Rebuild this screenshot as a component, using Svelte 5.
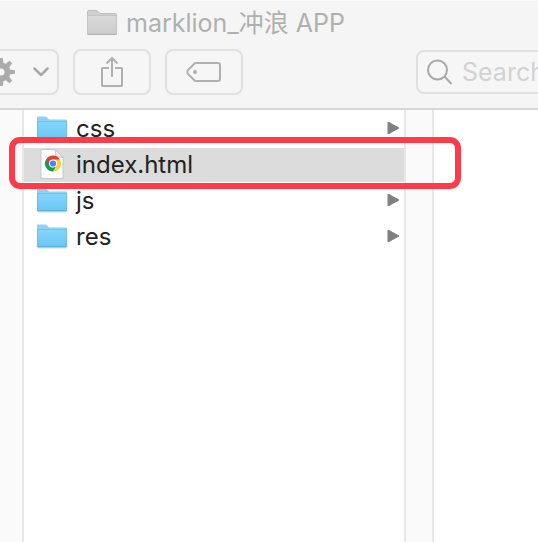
<script>
  const files = [
    { name: 'css', kind: 'folder' },
    { name: 'index.html', kind: 'html', selected: true },
    { name: 'js', kind: 'folder' },
    { name: 'res', kind: 'folder' }
  ];
  const teeth = [0, 45, 90, 135, 180, 225, 270, 315];
</script>

<div class="window">
  <header>
    <h1>
      <svg width="30" height="26" viewBox="0 0 30 26" aria-hidden="true">
        <defs>
          <linearGradient id="grey" x1="0" y1="0" x2="0" y2="1">
            <stop offset="0" stop-color="#dadada" />
            <stop offset="1" stop-color="#cccccc" />
          </linearGradient>
        </defs>
        <path d="M.5 24V2Q.5 .5 2 .5H9Q10 .5 11 1.500L13 3.500H28.500Q29.500 3.500 29.500 4.500V24Z" fill="#cfcfcf" stroke="#bdbdbd" />
        <path d="M.5 5.500H29.500V24H.5Z" fill="url(#grey)" stroke="#c4c4c4" />
        <path d="M.5 24.500H29.500" stroke="#b5b5b5" />
      </svg>
      <span>marklion_冲浪 APP</span>
    </h1>
    <div class="toolbar">
      <button class="action" aria-label="Action">
        <svg width="28" height="28" viewBox="-14 -14 28 28" aria-hidden="true">
          {#each teeth as angle}
            <path d="M-2.600 -8L-1.800 -14H1.800L2.600 -8Z" fill="#ababab" transform="rotate({angle})" />
          {/each}
          <circle r="6.500" fill="none" stroke="#ababab" stroke-width="6" />
        </svg>
        <svg width="16" height="10" viewBox="0 0 16 10" aria-hidden="true">
          <path d="M1.500 1.500L8 8L14.500 1.500" fill="none" stroke="#a9a9a9" stroke-width="2.500" stroke-linecap="round" stroke-linejoin="round" />
        </svg>
      </button>
      <button aria-label="Share">
        <svg width="24" height="32" viewBox="0 0 24 32" fill="none" stroke="#b0b0b0" stroke-width="2" aria-hidden="true">
          <path d="M9 12H2.500Q2 12 2 12.500V29.500Q2 30 2.500 30H21.500Q22 30 22 29.500V12.500Q22 12 21.500 12H15M12 21V2M6.500 7.500L12 2L17.500 7.500" />
        </svg>
      </button>
      <button aria-label="Tags">
        <svg width="36" height="22" viewBox="0 0 36 22" fill="none" stroke="#b0b0b0" stroke-width="2" aria-hidden="true">
          <path d="M10 2H32Q34 2 34 4V18Q34 20 32 20H10Q9 20 8 19L2 13Q.8 11 2 9L8 3Q9 2 10 2Z" />
          <circle cx="9" cy="11" r="2" fill="#b0b0b0" stroke="none" />
        </svg>
      </button>
      <label class="search">
        <svg width="27" height="27" viewBox="0 0 27 27" fill="none" stroke="#a9a9a9" stroke-width="2" aria-hidden="true">
          <circle cx="10.500" cy="11" r="9.500" />
          <path d="M17.500 17.500L24.500 25" />
        </svg>
        <input type="search" placeholder="Search" aria-label="Search" />
      </label>
    </div>
  </header>

  <main>
    <div class="gutter"></div>
    <ul>
      {#each files as file}
        <li class:selected={file.selected}>
          <button class="file">
            {#if file.kind === 'folder'}
              <svg width="32" height="26" viewBox="0 0 32 26" aria-hidden="true">
                <defs>
                  <linearGradient id="blue-{file.name}" x1="0" y1="0" x2="0" y2="1">
                    <stop offset="0" stop-color="#83d5fb" />
                    <stop offset="1" stop-color="#69c7f3" />
                  </linearGradient>
                </defs>
                <path d="M1 24V2.500Q1 1.500 2 1.500H9Q10 1.500 11 2.500L13 4.500H30Q31 4.500 31 5.500V24Z" fill="#8dd2f3" />
                <path d="M1 7H31V23Q31 24 30 24H2Q1 24 1 23Z" fill="url(#blue-{file.name})" />
                <path d="M1.500 6V23.500M30.500 6V23.500M1 6.500H31" stroke="#6bbde4" opacity=".7" />
                <path d="M1.500 24H30.500" stroke="#4b9fc6" />
                <path d="M2 25H30" stroke="#bccbd2" opacity=".6" />
              </svg>
            {:else}
              <svg width="32" height="32" viewBox="0 0 32 32" aria-hidden="true">
                <path d="M5 1.500H19L27 9.500V30.500H5Z" fill="#fff" stroke="#bdbdbd" stroke-width=".8" />
                <path d="M19 1.500L20 8.500L27 9.500Z" fill="#f1f1f1" stroke="#bbb" stroke-width=".8" />
                <g transform="translate(17 15.500)">
                  <path d="M0 0L-6.930 -4A8 8 0 0 1 6.930 -4Z" fill="#db4437" />
                  <path d="M0 0L6.930 -4A8 8 0 0 1 0 8Z" fill="#ffcd40" />
                  <path d="M0 0L0 8A8 8 0 0 1 -6.930 -4Z" fill="#0f9d58" />
                  <path d="M0 -4H6.930L3.460 2Z" fill="#ffcd40" />
                  <path d="M3.460 2L0 8L-3.460 2Z" fill="#0f9d58" />
                  <path d="M-3.460 2L-6.930 -4L0 -4Z" fill="#db4437" />
                  <circle r="4" fill="#fff" />
                  <circle r="3.100" fill="#4285f4" />
                </g>
              </svg>
            {/if}
            <span>{file.name}</span>
            {#if file.kind === 'folder'}
              <svg class="arrow" width="13" height="14" viewBox="0 0 13 14" aria-hidden="true">
                <path d="M1 1L12 7L1 13Z" fill="#808080" stroke="#808080" stroke-linejoin="round" />
              </svg>
            {/if}
          </button>
          {#if file.selected}<div class="highlight"></div>{/if}
        </li>
      {/each}
    </ul>
    <div class="gutter divider"></div>
    <div class="preview"></div>
  </main>
</div>

<style>
  :global(body) {
    margin: 0;
    background: #fff;
  }
  .window {
    min-height: 100vh;
    display: flex;
    flex-direction: column;
    overflow: hidden;
    font-family: Inter, "Noto Sans CJK SC", sans-serif;
    font-size: 24px;
    color: #222;
  }
  header {
    box-sizing: border-box;
    background: #f5f5f5;
    border-top: 1px solid #fbfbfb;
    border-bottom: 2px solid #d6d6d6;
    padding-bottom: 13px;
  }
  h1 {
    margin: 0;
    padding-left: 87px;
    height: 44px;
    display: flex;
    align-items: center;
    gap: 9px;
    font-size: 25px;
    line-height: 32px;
    font-weight: 400;
    color: #b0b0b0;
    white-space: nowrap;
  }
  .toolbar {
    display: flex;
    align-items: center;
    padding-top: 4px;
    gap: 14px;
  }
  button {
    font: inherit;
    color: inherit;
    margin: 0;
  }
  .toolbar button {
    box-sizing: border-box;
    flex: none;
    width: 78px;
    height: 46px;
    padding: 0;
    display: flex;
    align-items: center;
    justify-content: center;
    background: #f6f6f6;
    border: 2px solid #e0e0e0;
    border-radius: 8px;
  }
  .toolbar .action {
    margin-left: -32px;
    width: 91px;
    gap: 18px;
    padding-left: 8px;
  }
  .search {
    box-sizing: border-box;
    flex: 1 0 auto;
    height: 44px;
    margin-left: 159px;
    display: flex;
    align-items: center;
    gap: 8px;
    padding-left: 9px;
    background: #f6f6f6;
    border: 2px solid #e0e0e0;
    border-radius: 8px;
  }
  .search input {
    width: 140px;
    padding: 0;
    border: 0;
    outline: 0;
    background: none;
    font: inherit;
    font-size: 25px;
  }
  .search input::placeholder {
    color: #d2d2d2;
    opacity: 1;
  }
  main {
    flex: 1;
    display: flex;
  }
  .gutter {
    box-sizing: border-box;
    flex: none;
    width: 24px;
    background: #fafafa;
    border-right: 2px solid #e7e7e7;
  }
  .divider {
    width: 30px;
    border-left: 2px solid #e7e7e7;
  }
  ul {
    flex: 380 1 0;
    margin: 0;
    padding: 0;
    list-style: none;
  }
  .preview {
    flex: 104 1 0;
  }
  li {
    position: relative;
    height: 36px;
  }
  .file {
    width: 100%;
    height: 36px;
    padding: 0 4px 0 12px;
    border: 0;
    background: none;
    display: flex;
    align-items: center;
    gap: 8px;
    text-align: left;
  }
  .file span {
    flex: 1;
  }
  .selected .file {
    background: linear-gradient(#dcdcdc, #dcdcdc) 0 2px / 100% 34px no-repeat;
  }
  .highlight {
    position: absolute;
    inset: -9px -57px -7px -15px;
    border: 6px solid #fe3b49;
    border-radius: 11px;
    box-sizing: border-box;
    pointer-events: none;
    z-index: 1;
  }
</style>
